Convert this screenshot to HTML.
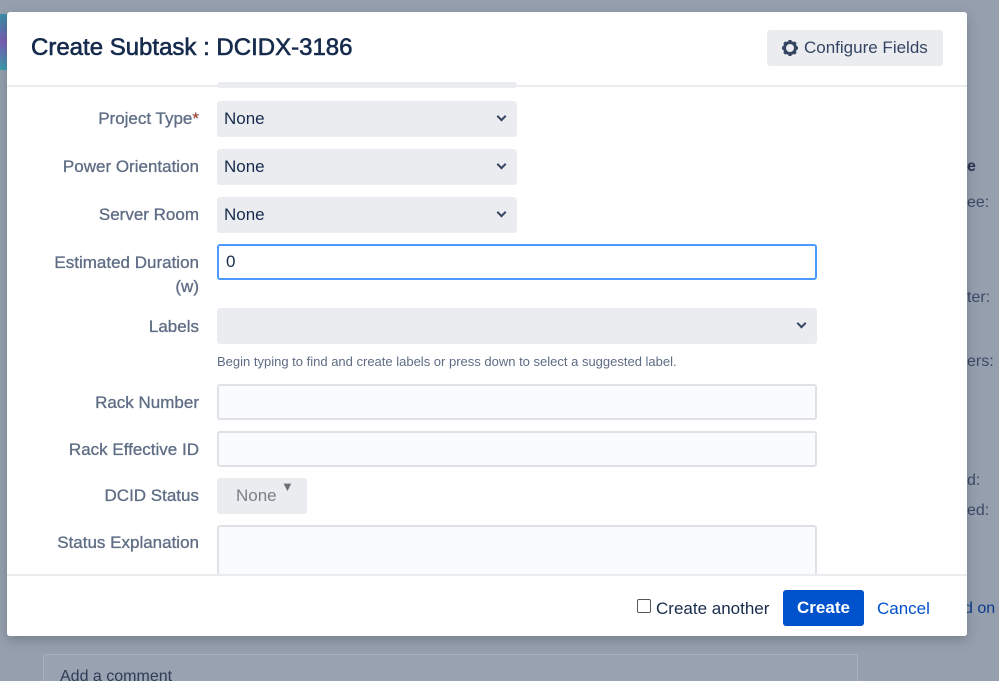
<!DOCTYPE html>
<html><head><style>
html,body{margin:0;width:999px;height:681px;overflow:hidden;}
body{background:#959fae;position:relative;font-family:"Liberation Sans",sans-serif;}
.bgtext{position:absolute;color:#2a3550;font-size:16px;}
.modal{position:absolute;left:7px;top:12px;width:960px;height:624px;background:#fff;border-radius:3px;box-shadow:0 4px 12px rgba(0,0,0,.2);overflow:hidden;}
h1{position:absolute;left:24px;top:22px;margin:0;font-size:24px;font-weight:normal;color:#172b4d;-webkit-text-stroke:0.6px #172b4d;}
.cfg{position:absolute;left:760px;top:18px;width:176px;height:36px;background:#ebecf0;border-radius:3px;font-size:17px;color:#344563;line-height:36px;}
.hr1{position:absolute;left:0;top:73px;width:960px;height:2px;background:#ebecf0;}
.lbl{position:absolute;right:768px;font-size:17px;color:#5e6c84;text-align:right;-webkit-text-stroke:0.3px #5e6c84;}
.sel{position:absolute;left:210px;width:300px;height:36px;background:#ebecf0;border-radius:3px;font-size:17px;color:#172b4d;line-height:36px;text-indent:7px;}
.chev{position:absolute;right:12px;width:5px;height:5px;border-right:2.5px solid #344563;border-bottom:2.5px solid #344563;transform:rotate(45deg);top:12px;}
.inp{position:absolute;left:210px;width:596px;height:32px;background:#fafbfc;border:2px solid #dfe1e6;border-radius:3px;}
.foot{position:absolute;left:0;top:562px;width:960px;height:2px;background:#ebecf0;}
</style></head><body>
<div style="position:absolute;left:0;top:14px;width:7px;height:56px;background:linear-gradient(#3a8fa8,#7a5fb5,#3aa0b0)"></div>
<div class="bgtext" style="left:967px;top:158px;font-weight:bold">e</div>
<div class="bgtext" style="left:967px;top:194px;color:#3b4a66">ee:</div>
<div class="bgtext" style="left:967px;top:289px;color:#3b4a66">ter:</div>
<div class="bgtext" style="left:967px;top:353px;color:#3b4a66">ers:</div>
<div class="bgtext" style="left:967px;top:472px;color:#3b4a66">d:</div>
<div class="bgtext" style="left:967px;top:502px;color:#3b4a66">ed:</div>
<div class="bgtext" style="left:964px;top:600px;color:#0c3b8a">d on</div>
<div style="position:absolute;left:43px;top:654px;width:813px;height:40px;border:1px solid #a9b1bd;border-radius:3px;background:#98a2b1"></div>
<div class="bgtext" style="left:60px;top:668px;color:#2f3c55">Add a comment</div>
<div class="modal">
<h1>Create Subtask : DCIDX-3186</h1>
<div class="cfg"><svg width="18" height="18" viewBox="0 0 18 18" style="position:absolute;left:14px;top:9px"><circle cx="9" cy="9" r="5.5" fill="none" stroke="#344563" stroke-width="3"/><g stroke="#344563" stroke-width="3"><path d="M9 1v3M9 14v3M1 9h3M14 9h3M3.3 3.3l2 2M12.7 12.7l2 2M3.3 14.7l2-2M12.7 5.3l2-2"/></g></svg><span style="position:absolute;left:37px">Configure Fields</span></div>
<div class="hr1"></div>
<div style="position:absolute;left:210px;top:70px;width:300px;height:6px;background:#ebecf0;border-radius:3px"></div>
<div class="lbl" style="top:97px">Project Type<span style="color:#de350b">*</span></div>
<div class="sel" style="top:89px">None<i class="chev"></i></div>
<div class="lbl" style="top:145px">Power Orientation</div>
<div class="sel" style="top:137px">None<i class="chev"></i></div>
<div class="lbl" style="top:193px">Server Room</div>
<div class="sel" style="top:185px">None<i class="chev"></i></div>
<div class="lbl" style="top:239px;line-height:24px">Estimated Duration<br>(w)</div>
<div style="position:absolute;left:210px;top:232px;width:596px;height:32px;border:2px solid #4c9aff;border-radius:3px;font-size:17px;color:#172b4d;line-height:32px;text-indent:7px">0</div>
<div class="lbl" style="top:305px">Labels</div>
<div class="sel" style="top:296px;width:600px"><i class="chev"></i></div>
<div style="position:absolute;left:210px;top:342px;font-size:13px;color:#5e6c84">Begin typing to find and create labels or press down to select a suggested label.</div>
<div class="lbl" style="top:381px">Rack Number</div>
<div class="inp" style="top:372px"></div>
<div class="lbl" style="top:428px">Rack Effective ID</div>
<div class="inp" style="top:419px"></div>
<div class="lbl" style="top:474px">DCID Status</div>
<div style="position:absolute;left:210px;top:466px;width:90px;height:36px;background:#ebecf0;border-radius:3px;font-size:17px;color:#7a7f88;line-height:36px"><span style="position:absolute;left:19px">None</span><span style="position:absolute;left:64px;top:-9px;font-size:13px;color:#6b6f76">▼</span></div>
<div class="lbl" style="top:521px">Status Explanation</div>
<div class="inp" style="top:513px;height:60px"></div>
<div class="foot"></div>
<div style="position:absolute;left:0;top:564px;width:960px;height:60px;background:#fff"></div>
<div style="position:absolute;left:630px;top:587px;width:12px;height:12px;border:1.5px solid #555;border-radius:2px"></div>
<div style="position:absolute;left:649px;top:587px;font-size:17px;color:#172b4d">Create another</div>
<div style="position:absolute;left:776px;top:578px;width:81px;height:36px;background:#0052cc;border-radius:3px;color:#fff;font-size:17px;font-weight:bold;line-height:36px;text-align:center">Create</div>
<div style="position:absolute;left:870px;top:587px;font-size:17px;color:#0052cc">Cancel</div>
</div>
</body></html>
